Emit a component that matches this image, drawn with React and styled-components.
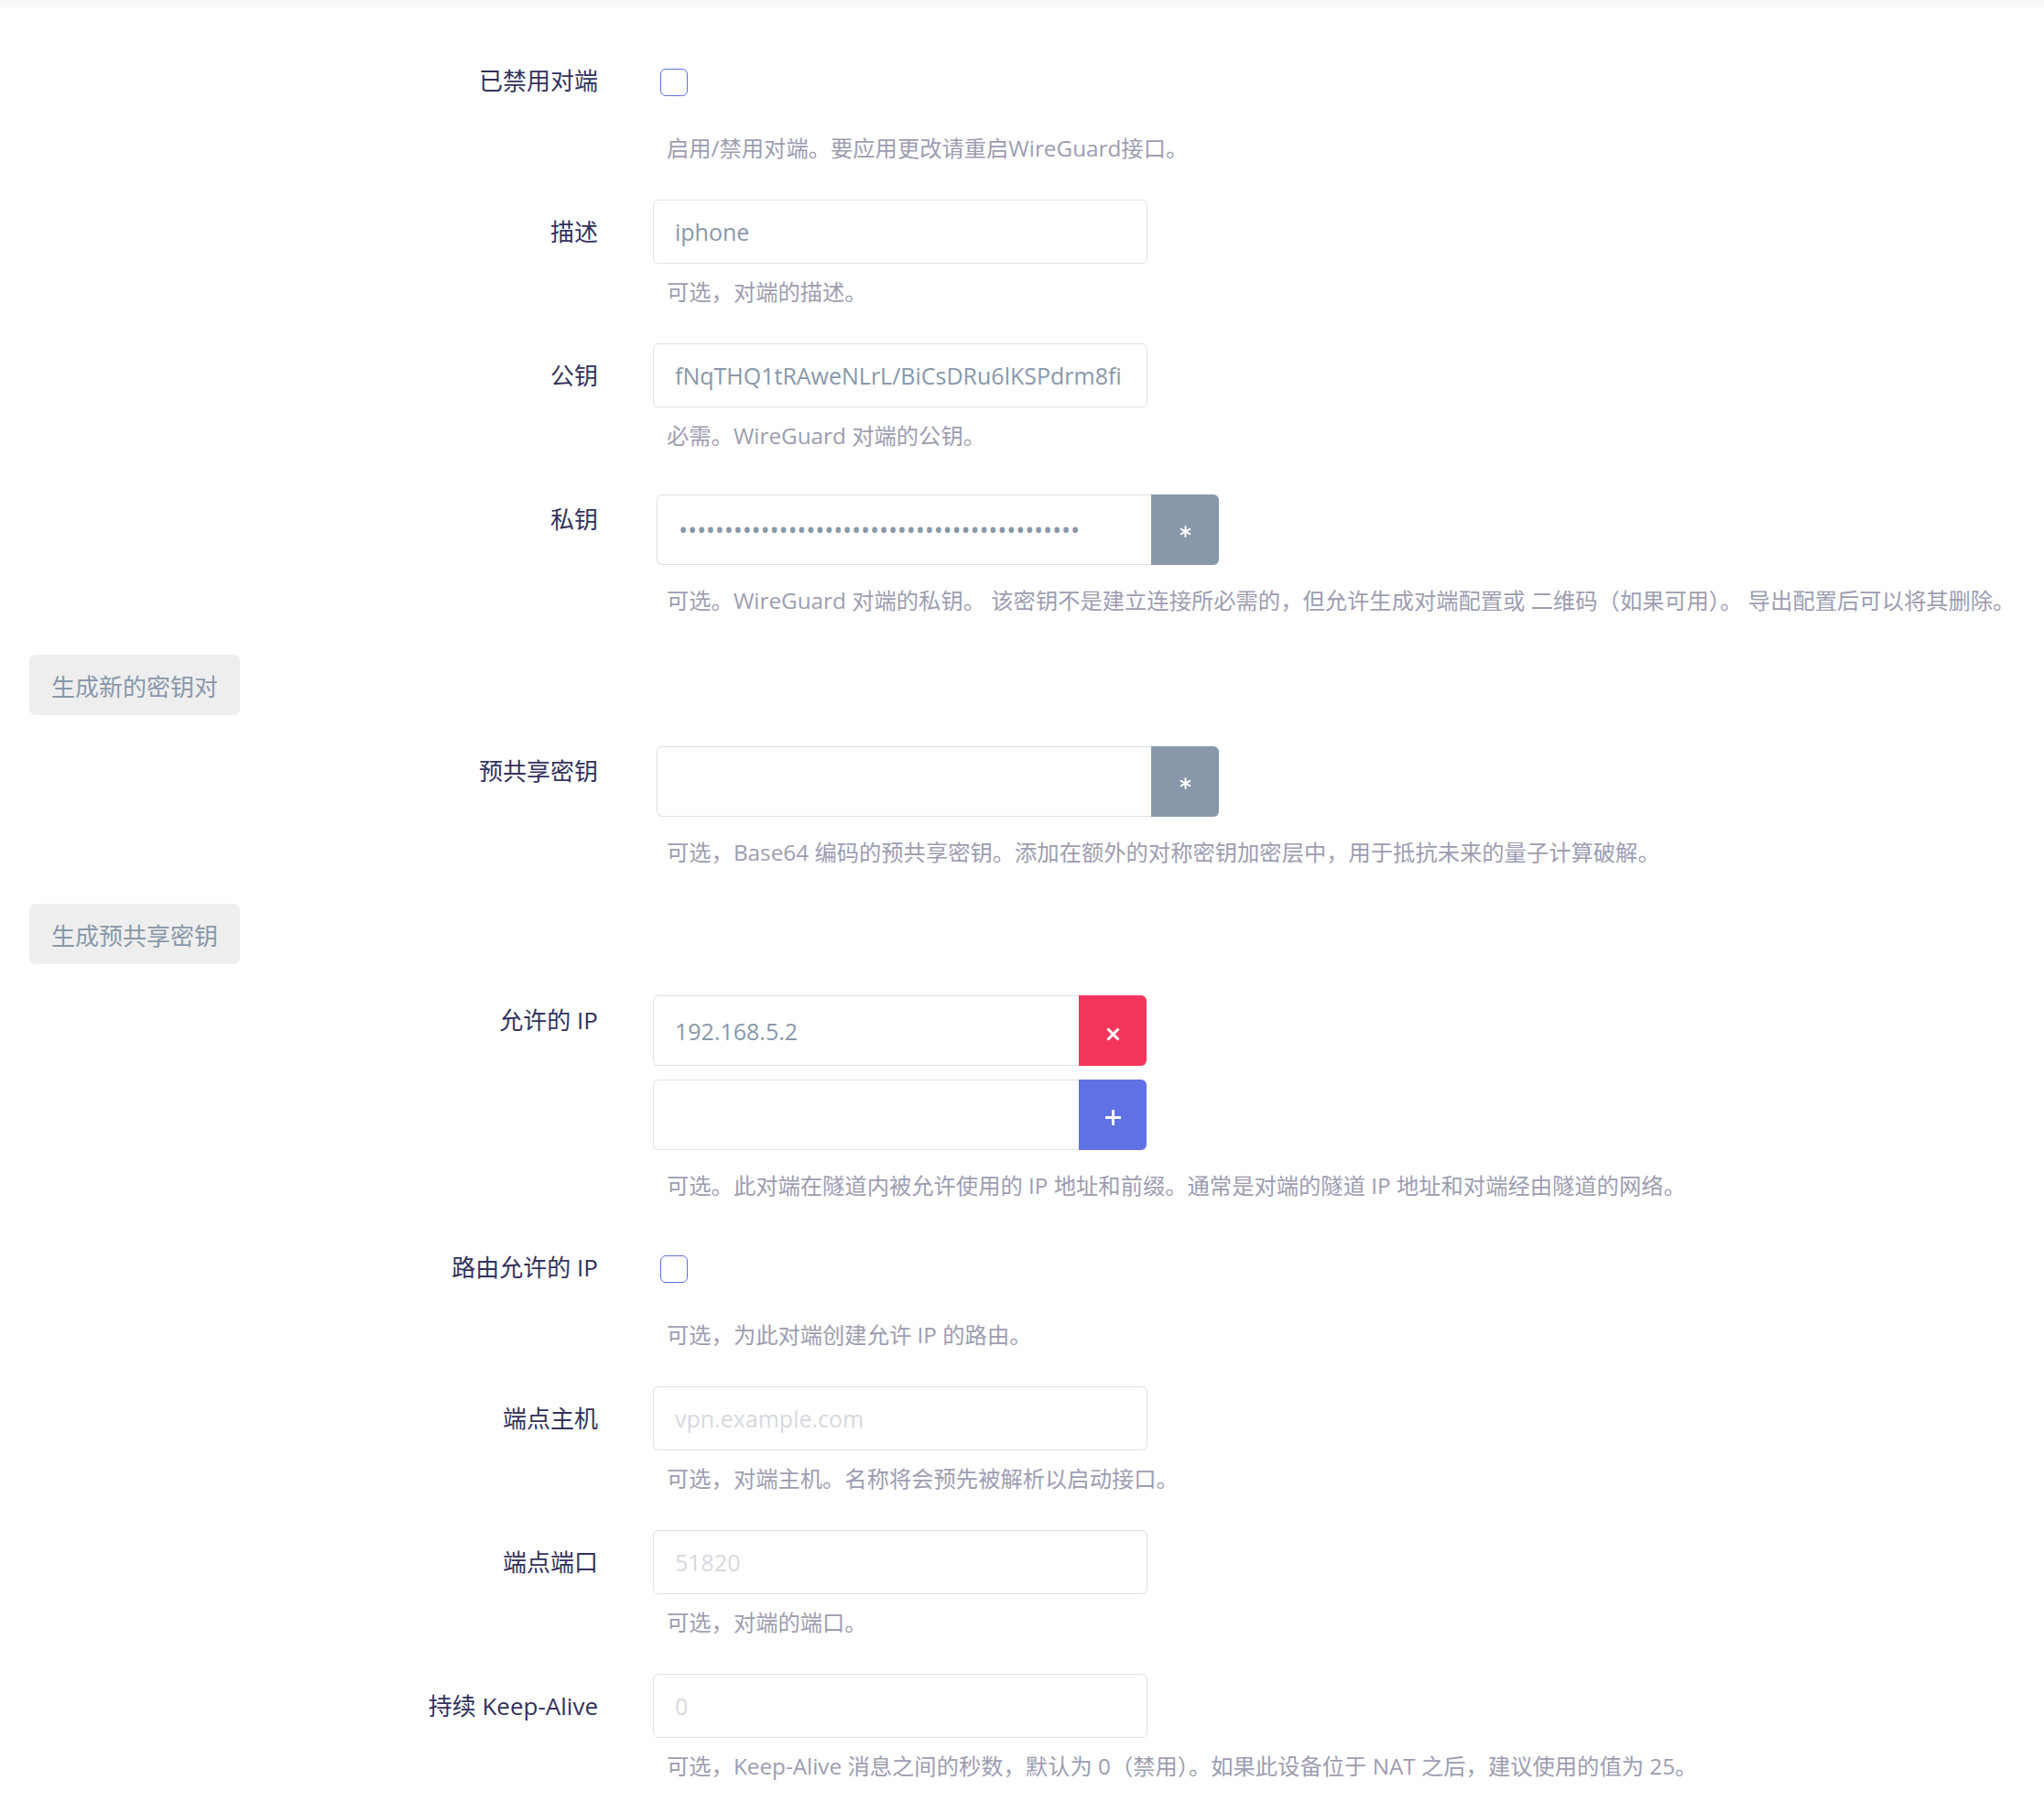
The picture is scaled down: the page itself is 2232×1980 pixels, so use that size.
import styled, { createGlobalStyle } from 'styled-components';

const GlobalStyle = createGlobalStyle`
body {
  margin: 0;
  background: #fff;
  font-family: "Open Sans", "Noto Sans CJK SC", sans-serif;
}
`

const TopShade = styled.div`
height: 12px;
background: linear-gradient(#f6f6f7, #fff);
`

const Page = styled.div`
padding: 41px 0 40px 32px;
`

const Row = styled.div`
display: grid;
grid-template-columns: 621px 1fr;
column-gap: 60px;
margin-bottom: ${p => p.$mb ?? 38}px;
`

const Label = styled.label`
text-align: right;
font-size: 26px;
line-height: 34px;
color: #32325d;
padding-top: 18px;
`

const Control = styled.div`
display: flex;
flex-direction: column;
align-items: flex-start;
`

const CheckWrap = styled.div`
height: 78px;
padding: 22px 0 0 8px;
box-sizing: border-box;
`

const Check = styled.span`
display: block;
width: 30px;
height: 30px;
box-sizing: border-box;
border: 1.5px solid #5e72e4;
border-radius: 6px;
`

const TextInput = styled.input`
box-sizing: border-box;
width: ${p => p.$w || 540}px;
height: ${p => p.$h || 70}px;
padding: 0 23px;
border: 1px solid #dfe1e7;
border-radius: ${p => p.$joined ? '6px 0 0 6px' : '6px'};
${p => p.$joined && 'border-right: none;'}
font-family: "Open Sans", "Noto Sans CJK SC", sans-serif;
font-size: 25px;
color: #8898aa;
outline: none;
background: #fff;
&::placeholder {
  color: #d6d9df;
}
&[type='password'] {
  font-size: 27px;
  letter-spacing: -0.2px;
}
`

const Group = styled.div`
display: flex;
margin: ${p => p.$mt ?? 8}px 0 8px ${p => p.$shift || 0}px;
`

const AddonButton = styled.button`
width: 74px;
height: 77px;
border: none;
border-radius: 0 6px 6px 0;
background: ${p => p.$bg};
color: #fff;
display: flex;
align-items: center;
justify-content: center;
padding: 0;
`

const Help = styled.div`
margin-top: 13px;
padding-left: 15px;
font-size: 24.3px;
line-height: 36px;
color: #9d9db1;
white-space: nowrap;
`

const ActionButton = styled.button`
display: block;
margin: ${p => p.$mt ?? 41}px 0 26px;
height: 66px;
padding: 0 24px;
border: none;
border-radius: 7px;
background: #eeeeee;
color: #8898aa;
font-family: "Noto Sans CJK SC", sans-serif;
font-size: 26px;
`

function Asterisk() {
  return <svg width="13" height="13" viewBox="0 0 13 13" style={{ marginTop: 3 }}>
    <g stroke="#fff" strokeWidth="2" strokeLinecap="round">
      <line x1="6.5" y1="1" x2="6.5" y2="12" />
      <line x1="1.7" y1="3.8" x2="11.3" y2="9.2" />
      <line x1="1.7" y1="9.2" x2="11.3" y2="3.8" />
    </g>
  </svg>
}

function Cross() {
  return <svg width="15" height="15" viewBox="0 0 15 15" style={{ marginTop: 7 }}>
    <g stroke="#fff" strokeWidth="3">
      <line x1="1.5" y1="1.5" x2="13.5" y2="13.5" />
      <line x1="13.5" y1="1.5" x2="1.5" y2="13.5" />
    </g>
  </svg>
}

function Plus() {
  return <svg width="17" height="17" viewBox="0 0 17 17" style={{ marginTop: 6 }}>
    <g stroke="#fff" strokeWidth="3">
      <line x1="8.5" y1="0" x2="8.5" y2="17" />
      <line x1="0" y1="8.5" x2="17" y2="8.5" />
    </g>
  </svg>
}

function CheckRow({ label, help }) {
  return <Row>
    <Label>{label}</Label>
    <Control>
      <CheckWrap><Check /></CheckWrap>
      <Help>{help}</Help>
    </Control>
  </Row>
}

function InputRow({ label, help, value, placeholder }) {
  return <Row>
    <Label>{label}</Label>
    <Control>
      <TextInput defaultValue={value} placeholder={placeholder} />
      <Help>{help}</Help>
    </Control>
  </Row>
}

function KeyRow({ label, help, value, password }) {
  return <Row>
    <Label>{label}</Label>
    <Control>
      <Group $shift={4}>
        <TextInput $joined $h={77} type={password ? 'password' : 'text'} defaultValue={value} />
        <AddonButton $bg="#8898aa"><Asterisk /></AddonButton>
      </Group>
      <Help>{help}</Help>
    </Control>
  </Row>
}

export default function App() {
  return <>
    <GlobalStyle />
    <TopShade />
    <Page>
      <CheckRow label="已禁用对端" help="启用/禁用对端。要应用更改请重启WireGuard接口。" />
      <InputRow label="描述" value="iphone" help="可选，对端的描述。" />
      <InputRow label="公钥" value="fNqTHQ1tRAweNLrL/BiCsDRu6lKSPdrm8fi" help="必需。WireGuard 对端的公钥。" />
      <KeyRow label="私钥" password value="xxxxxxxxxxxxxxxxxxxxxxxxxxxxxxxxxxxxxxxxxxxx"
        help="可选。WireGuard 对端的私钥。 该密钥不是建立连接所必需的，但允许生成对端配置或 二维码（如果可用）。 导出配置后可以将其删除。" />
      <ActionButton>生成新的密钥对</ActionButton>
      <KeyRow label="预共享密钥" value=""
        help="可选，Base64 编码的预共享密钥。添加在额外的对称密钥加密层中，用于抵抗未来的量子计算破解。" />
      <ActionButton $mt={38}>生成预共享密钥</ActionButton>
      <Row $mb={36}>
        <Label>允许的 IP</Label>
        <Control>
          <Group>
            <TextInput $joined $w={465} $h={77} defaultValue="192.168.5.2" />
            <AddonButton $bg="#f5365c"><Cross /></AddonButton>
          </Group>
          <Group $mt={7}>
            <TextInput $joined $w={465} $h={77} />
            <AddonButton $bg="#5e72e4"><Plus /></AddonButton>
          </Group>
          <Help>可选。此对端在隧道内被允许使用的 IP 地址和前缀。通常是对端的隧道 IP 地址和对端经由隧道的网络。</Help>
        </Control>
      </Row>
      <CheckRow label="路由允许的 IP" help="可选，为此对端创建允许 IP 的路由。" />
      <InputRow label="端点主机" placeholder="vpn.example.com" help="可选，对端主机。名称将会预先被解析以启动接口。" />
      <InputRow label="端点端口" placeholder="51820" help="可选，对端的端口。" />
      <InputRow label="持续 Keep-Alive" placeholder="0" help="可选，Keep-Alive 消息之间的秒数，默认为 0（禁用）。如果此设备位于 NAT 之后，建议使用的值为 25。" />
    </Page>
  </>
}
